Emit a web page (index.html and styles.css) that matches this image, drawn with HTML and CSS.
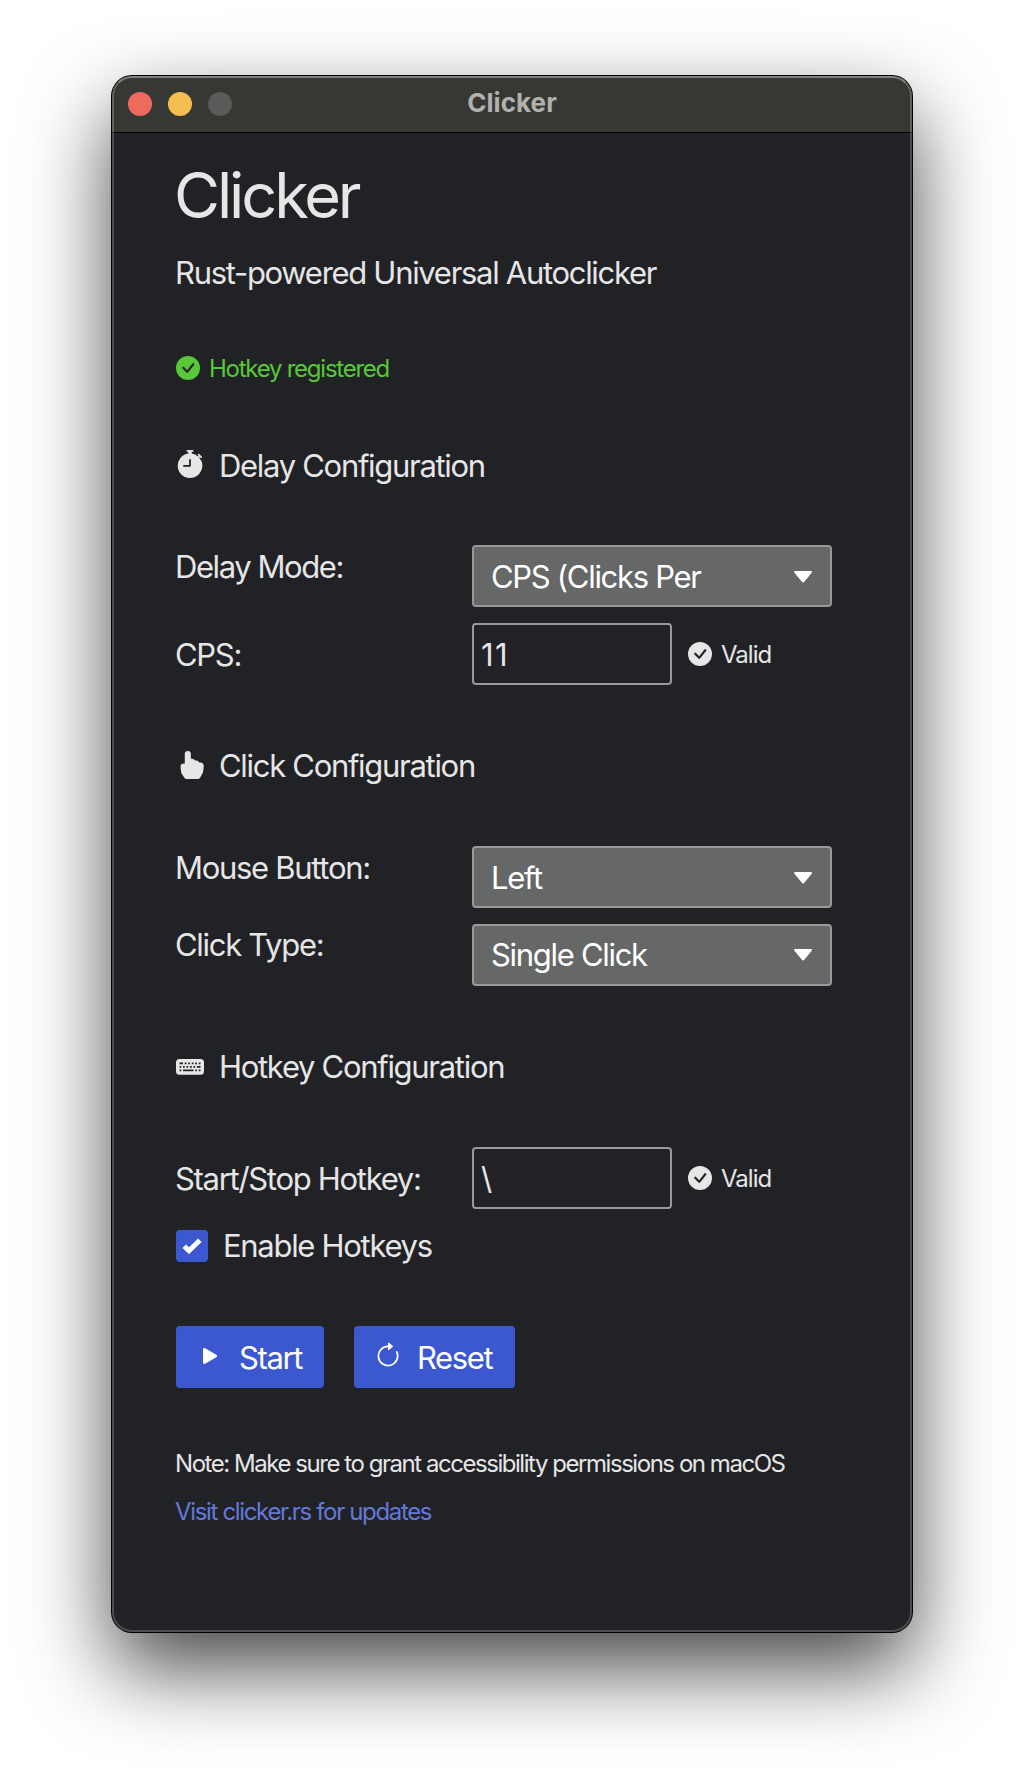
FILE: index.html
```
<!DOCTYPE html>
<html lang="en">
<head>
<meta charset="utf-8">
<title>Clicker</title>
<link rel="stylesheet" href="styles.css">
</head>
<body>
<svg class="sprite" aria-hidden="true">
  <symbol id="check-circle" viewBox="0 0 16 16"><path d="M16 8A8 8 0 1 1 0 8a8 8 0 0 1 16 0m-3.97-3.03a.75.75 0 0 0-1.08.022L7.477 9.417 5.384 7.323a.75.75 0 0 0-1.06 1.06L6.97 11.03a.75.75 0 0 0 1.079-.02l3.992-4.99a.75.75 0 0 0-.01-1.05z"/></symbol>
  <symbol id="caret" viewBox="0 0 18 12"><path d="M1.3 0H16.9a1 1 0 0 1 .8 1.7L10.3 10.8a1.5 1.5 0 0 1-2.4 0L.4 1.700A1 1 0 0 1 1.300 0z"/></symbol>
</svg>
<main class="window">
  <header class="titlebar">
    <div class="lights"><span class="light close"></span><span class="light minimize"></span><span class="light zoom"></span></div>
    <span class="titlebar-text">Clicker</span>
  </header>
  <div class="content">
    <h1 class="title">Clicker</h1>
    <p class="subtitle">Rust-powered Universal Autoclicker</p>
    <p class="status registered"><svg class="status-icon"><use href="#check-circle"/></svg><span>Hotkey registered</span></p>

    <h2 class="heading">
      <svg class="icon" viewBox="0 0 16 16"><path d="M6.500 0a.5.5 0 0 0 0 1H7v1.070A7.001 7.001 0 0 0 8 16a7 7 0 0 0 5.290-11.584l.013-.012.354-.354.353.354a.5.5 0 1 0 .707-.707l-1.414-1.415a.5.5 0 1 0-.707.707l.354.354-.354.354-.012.012A6.970 6.970 0 0 0 9 2.071V1h.5a.5.5 0 0 0 0-1zm2 5.600V9a.5.5 0 0 1-.5.5H4.500a.5.5 0 0 1 0-1h3V5.600a.5.5 0 1 1 1 0"/></svg>
      <span>Delay Configuration</span>
    </h2>
    <div class="fields delay">
      <div class="row">
        <label class="label mode">Delay Mode:</label>
        <button class="select"><span>CPS (Clicks Per</span><svg class="caret"><use href="#caret"/></svg></button>
      </div>
      <div class="row input-row">
        <label class="label">CPS:</label>
        <div class="input number">11</div>
        <p class="status"><svg class="status-icon"><use href="#check-circle"/></svg><span class="valid">Valid</span></p>
      </div>
    </div>

    <h2 class="heading">
      <svg class="icon low" viewBox="0 0 16 16"><path d="M8.500 4.466V1.750a1.750 1.750 0 1 0-3.500 0v5.340l-1.200.24a1.500 1.500 0 0 0-1.196 1.636l.345 3.106a2.500 2.500 0 0 0 .405 1.110l1.433 2.150A1.500 1.500 0 0 0 6.035 16h6.385a1.500 1.500 0 0 0 1.302-.756l1.395-2.441a3.500 3.500 0 0 0 .444-1.389l.271-2.715a2 2 0 0 0-1.990-2.199h-.581a5 5 0 0 0-.195-.248c-.191-.229-.51-.568-.88-.716-.364-.146-.846-.132-1.158-.108l-.132.012a1.260 1.260 0 0 0-.56-.642 2.600 2.600 0 0 0-.738-.288c-.31-.062-.739-.058-1.050-.046z"/></svg>
      <span>Click Configuration</span>
    </h2>
    <div class="fields click">
      <div class="row">
        <label class="label">Mouse Button:</label>
        <button class="select"><span>Left</span><svg class="caret"><use href="#caret"/></svg></button>
      </div>
      <div class="row raised">
        <label class="label">Click Type:</label>
        <button class="select"><span>Single Click</span><svg class="caret"><use href="#caret"/></svg></button>
      </div>
    </div>

    <h2 class="heading">
      <svg class="icon low" viewBox="0 0 16 16"><path fill-rule="evenodd" d="M0 6a2 2 0 0 1 2-2h12a2 2 0 0 1 2 2v5a2 2 0 0 1-2 2H2a2 2 0 0 1-2-2zM2 6h2v1H2zM5 6h1v1H5zM7 6h1v1H7zM9 6h1v1H9zM11 6h1v1h-1zM13 6h1v1h-1zM2 8h1v1H2zM4 8h1v1H4zM6 8h1v1H6zM8 8h1v1H8zM10 8h1v1h-1zM12 8h2v1h-2zM2 10h1v1H2zM4 10h6v1H4zM11 10h1v1h-1zM13 10h1v1h-1z"/></svg>
      <span>Hotkey Configuration</span>
    </h2>
    <div class="fields hotkey">
      <div class="row input-row">
        <label class="label">Start/Stop Hotkey:</label>
        <div class="input">\</div>
        <p class="status"><svg class="status-icon"><use href="#check-circle"/></svg><span class="valid">Valid</span></p>
      </div>
    </div>
    <label class="check-row">
      <span class="checkbox"><svg class="tick" viewBox="0 0 20 16"><path d="M2.200 8.200 7 12.700 17.800 2.200"/></svg></span>
      <span>Enable Hotkeys</span>
    </label>

    <div class="actions">
      <button class="action"><svg class="icon" viewBox="0 0 16 16"><path d="m11.596 8.697-6.363 3.692c-.54.313-1.233-.066-1.233-.697V4.308c0-.63.692-1.010 1.233-.696l6.363 3.692a.802.802 0 0 1 0 1.393"/></svg><span class="start">Start</span></button>
      <button class="action reset"><svg class="icon" viewBox="0 0 16 16"><path fill-rule="evenodd" d="M8 3a5 5 0 1 0 4.546 2.914.5.5 0 0 1 .908-.417A6 6 0 1 1 8 2z"/><path d="M8 4.466V.534a.25.25 0 0 1 .41-.192l2.360 1.966c.12.1.12.284 0 .384L8.410 4.658A.25.25 0 0 1 8 4.466"/></svg><span>Reset</span></button>
    </div>

    <p class="note">Note: Make sure to grant accessibility permissions on macOS</p>
    <a class="link">Visit clicker.rs for updates</a>
  </div>
</main>
</body>
</html>
```
FILE: styles.css
```
* { box-sizing: border-box; }

body {
  margin: 0;
  height: 1780px;
  padding: 76px 0 0 112px;
  background: #fff;
  color: #e6e6e6;
  font: 31px/38px Inter, "Liberation Sans", sans-serif;
  letter-spacing: -1.3px;
  overflow: hidden;
}

h1, h2, p { margin: 0; font-weight: 400; }

svg { display: block; flex: none; fill: currentColor; }

.sprite { width: 0; height: 0; position: absolute; }

.window {
  position: relative;
  width: 800px;
  height: 1556px;
  border-radius: 20px;
  background: #212226;
  box-shadow: 0 0 0 1px #000, 0 36px 84px rgba(0, 0, 0, .73);
}

/* inner highlight along the window edge */
.window::after {
  content: "";
  position: absolute;
  inset: 0;
  border-radius: 20px;
  border: 2px solid rgba(255, 255, 255, .2);
  border-top-color: rgba(255, 255, 255, .36);
  pointer-events: none;
}

.titlebar {
  display: grid;
  grid-template-columns: 1fr auto 1fr;
  align-items: center;
  height: 57px;
  padding: 0 16px;
  border-radius: 20px 20px 0 0;
  border-bottom: 1px solid #000;
  background: #373734;
}

.lights { display: flex; gap: 16px; }
.light { width: 24px; height: 24px; border-radius: 50%; }
.close { background: #ed6a5f; }
.minimize { background: #f5bf4f; }
.zoom { background: #5a5a58; }

.titlebar-text {
  padding-bottom: 4px;
  color: #b1b1af;
  font-size: 26px;
  font-weight: 700;
  line-height: 31px;
  letter-spacing: .05px;
}

.content { padding: 24px 64px 0; text-indent: -1px; }

.title { font-size: 63px; line-height: 76px; letter-spacing: -3.1px; text-indent: -2px; }
.subtitle { margin-top: 21px; }

.status {
  display: flex;
  align-items: center;
  gap: 10px;
  font-size: 24px;
  line-height: 29px;
  letter-spacing: -1.25px;
}
.status-icon { width: 24px; height: 24px; }
.registered { margin-top: 62px; color: #59c837; }
.registered .status-icon { margin-bottom: 1px; }

.heading { display: flex; gap: 16px; height: 38px; margin-top: 62px; font-size: 31px; }
.registered + .heading { margin-top: 64px; }
.icon { width: 28px; height: 28px; margin-top: 3px; }
.low { margin-top: 4px; }

.fields { display: flex; flex-direction: column; gap: 16px; margin-top: 61px; }
.delay { margin-top: 60px; }

.row { display: grid; grid-template-columns: 296px auto 1fr; height: 62px; }
.label { padding-top: 3px; }
.mode { letter-spacing: -1.42px; }
.raised .label { padding-top: 2px; }
.input-row { align-items: center; }
.input-row .label { padding-top: 1px; }

.select {
  display: flex;
  justify-content: space-between;
  width: 360px;
  height: 62px;
  padding: 11px 18px 0;
  border: 2px solid #989998;
  border-radius: 4px;
  background: #666867;
  color: #fff;
  font: inherit;
  letter-spacing: inherit;
  text-indent: -1px;
}
.raised .select { padding-top: 10px; }
.caret { width: 18px; height: 12px; margin-top: 13px; }

.input {
  width: 200px;
  height: 62px;
  padding: 11px 8px 0;
  border: 2px solid #989998;
  border-radius: 4px;
}
.number { letter-spacing: 1.5px; }
.row .status { gap: 10px; padding-left: 16px; }
.valid { letter-spacing: -1px; }

.check-row { display: flex; gap: 16px; margin-top: 18px; }
.checkbox {
  display: grid;
  place-items: center;
  width: 32px;
  height: 32px;
  margin-top: 3px;
  border-radius: 4px;
  background: #3c58d1;
}
.tick { width: 20px; height: 16px; fill: none; stroke: #fff; stroke-width: 5; }

.actions { display: flex; gap: 30px; margin-top: 61px; }
.action {
  display: flex;
  gap: 16px;
  width: 148px;
  height: 62px;
  padding: 13px 0 0 20px;
  border: 0;
  border-radius: 4px;
  background: #3c58d1;
  color: #fff;
  font: inherit;
  letter-spacing: -1.4px;
  text-indent: -1px;
}
.reset { width: 161px; }

.note, .link { display: block; font-size: 24px; line-height: 29px; }
.note { margin-top: 61px; letter-spacing: -1.455px; white-space: nowrap; }
.link { margin-top: 19px; color: #6479d9; letter-spacing: -1.34px; }
```
